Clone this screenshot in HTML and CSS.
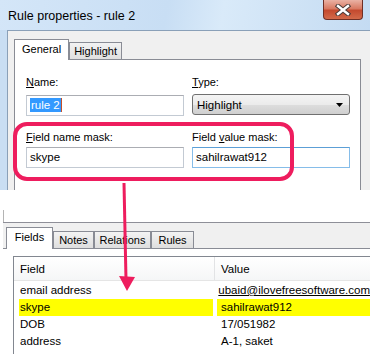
FILE: index.html
```html
<!DOCTYPE html>
<html lang="en">

<head>
    <meta charset="UTF-8">
    <title>Rule properties - rule 2</title>
    <link rel="stylesheet" href="styles.css">
</head>

<body>
    <!-- Rule properties dialog (top capture) -->
    <div class="window">
        <div class="titlebar">
            <span class="title">Rule properties - rule 2</span>
            <div class="close">
                <svg width="16" height="12" viewBox="0 0 16 12">
                    <path d="M3 2 L13 10 M13 2 L3 10" stroke="#4a3a38" stroke-width="4.4" stroke-linecap="square" fill="none"/>
                    <path d="M3 2 L13 10 M13 2 L3 10" stroke="#ffffff" stroke-width="2.4" stroke-linecap="square" fill="none"/>
                </svg>
            </div>
        </div>

        <div class="dialog-body">
            <div class="tabs">
                <div class="tab active">General</div>
                <div class="tab">Highlight</div>
            </div>

            <div class="pane">
                <div class="form-grid">
                    <div class="field first">
                        <label><u>N</u>ame:</label>
                        <div class="input"><span class="selected">rule 2</span></div>
                    </div>
                    <div class="field first">
                        <label><u>T</u>ype:</label>
                        <div class="select">
                            <span>Highlight</span>
                            <svg width="7" height="4" viewBox="0 0 7 4"><path d="M0 0 H7 L3.5 4 Z" fill="#000"/></svg>
                        </div>
                    </div>
                    <div class="field">
                        <label><u>F</u>ield name mask:</label>
                        <div class="input">skype</div>
                    </div>
                    <div class="field">
                        <label>Field <u>v</u>alue mask:</label>
                        <div class="input focused">sahilrawat912</div>
                    </div>
                </div>
            </div>
        </div>
    </div>

    <!-- Record panel (bottom capture) -->
    <div class="lower">
        <div class="frame-edge"></div>
        <div class="strip">
            <div class="tab2 active">Fields</div>
            <div class="tab2">Notes</div>
            <div class="tab2">Relations</div>
            <div class="tab2">Rules</div>
        </div>
        <div class="pane2">
            <div class="list">
                <div class="list-head">
                    <div class="col-field">Field</div>
                    <div class="col-value">Value</div>
                </div>
                <div class="row">
                    <div class="cell-field">email address</div>
                    <div class="cell-value link">ubaid@ilovefreesoftware.com</div>
                </div>
                <div class="row hit">
                    <div class="cell-field">skype</div>
                    <div class="cell-value">sahilrawat912</div>
                </div>
                <div class="row">
                    <div class="cell-field">DOB</div>
                    <div class="cell-value">17/051982</div>
                </div>
                <div class="row">
                    <div class="cell-field">address</div>
                    <div class="cell-value">A-1, saket</div>
                </div>
            </div>
        </div>
    </div>

    <!-- Annotation drawn over both captures -->
    <svg class="annot" width="370" height="354" viewBox="0 0 370 354">
        <rect x="15" y="124" width="277" height="55" rx="12" ry="12" fill="none" stroke="#ee1d5e" stroke-width="4"/>
        <path d="M124 183 L126 280" stroke="#ee1d5e" stroke-width="3" fill="none"/>
        <path d="M119 276 L135 277 L127 291 Z" fill="#ee1d5e"/>
    </svg>
</body>

</html>
```

FILE: styles.css
```css
body {
    font-family: 'Liberation Sans', Arial, sans-serif;
    font-size: 11px;
    margin: 0;
    padding: 0;
    width: 370px;
    height: 354px;
    overflow: hidden;
    background-color: #ffffff;
    color: #000;
}

/* Dialog window */
.window {
    height: 190px;
    display: flex;
    flex-direction: column;
    background-color: #c9def3;
}

.titlebar {
    height: 30px;
    display: flex;
    align-items: flex-start;
    justify-content: space-between;
    background: linear-gradient(100deg, #d4e6f8 0%, #c8def4 45%, #d9eaf9 60%, #c4dbf2 100%);
}

.title {
    font-size: 12.5px;
    margin: 9px 0 0 8px;
    color: #000;
}

.close {
    width: 38px;
    height: 19px;
    margin-right: 7px;
    border: 1px solid #6e2f26;
    border-top: none;
    border-radius: 0 0 4px 4px;
    background: linear-gradient(#eab2a4 0%, #d97a63 45%, #c44a2f 55%, #d36a4a 100%);
    display: flex;
    align-items: center;
    justify-content: center;
}

.dialog-body {
    flex: 1;
    display: flex;
    flex-direction: column;
    margin-left: 7px;
    border-top: 1px solid #8aa0b8;
    border-left: 1px solid #8aa0b8;
    background-color: #f0f0f0;
    padding-left: 6px;
}

.tabs {
    display: flex;
    align-items: flex-end;
    height: 19px;
    margin-top: 9px;
}

.tab {
    height: 16px;
    line-height: 16px;
    padding: 0 4px;
    border: 1px solid #898c95;
    border-bottom: none;
    background: linear-gradient(#f2f2f2, #e0e0e0);
}

.tab.active {
    position: relative;
    z-index: 1;
    height: 20px;
    line-height: 19px;
    margin-bottom: -1px;
    padding: 0 7px;
    background: #ffffff;
}

.pane {
    flex: 1;
    width: 345px;
    border: 1px solid #898c95;
    border-bottom: none;
    background-color: #ffffff;
}

.form-grid {
    display: grid;
    grid-template-columns: 158px 158px;
    column-gap: 8px;
    row-gap: 13px;
    padding: 14px 0 0 11px;
}

.field label {
    display: block;
    height: 16px;
    line-height: 16px;
    margin-bottom: 2px;
}

.field.first label {
    margin-bottom: 5px;
}

.input {
    height: 19px;
    line-height: 19px;
    padding: 0 3px;
    border: 1px solid #c3cad3;
    border-top-color: #abadb3;
    background: #ffffff;
    font-size: 11.5px;
}

.input.focused {
    border-color: #86bde9;
    border-top-color: #5c9fd6;
}

.selected {
    background-color: #3399ff;
    color: #ffffff;
    padding: 1px 1px;
    border-right: 1px solid #c4502a;
}

.select {
    height: 19px;
    margin-top: -1px;
    padding: 0 6px 0 4px;
    border: 1px solid #707070;
    border-radius: 3px;
    background: linear-gradient(#f4f4f4 0%, #ebebeb 50%, #dddddd 51%, #cfcfcf 100%);
    display: flex;
    align-items: center;
    justify-content: space-between;
    font-size: 11.5px;
}

/* Lower record panel */
.lower {
    margin-top: 20px;
    margin-left: 3px;
}

.frame-edge {
    height: 12px;
    border-left: 1px solid #b4b4b4;
}

.strip {
    height: 25px;
    display: flex;
    align-items: flex-end;
    padding-left: 3px;
    border-top: 1px solid #8e8f98;
    background-color: #f0f0f0;
}

.tab2 {
    height: 16px;
    line-height: 16px;
    border: 1px solid #898c95;
    border-bottom: none;
    text-align: center;
    background: linear-gradient(#f3f3f3, #dedede);
    font-size: 11px;
}

.tab2:nth-child(2) { width: 39px; }
.tab2:nth-child(3) { width: 55px; }
.tab2:nth-child(4) { width: 41px; }

.tab2.active {
    position: relative;
    z-index: 1;
    width: 45px;
    height: 21px;
    line-height: 19px;
    margin-bottom: -1px;
    background: #ffffff;
}

.pane2 {
    border-top: 1px solid #898c95;
    background-color: #ffffff;
    padding: 7px 0 0 10px;
    height: 98px;
}

.list {
    border-left: 1px solid #828790;
    border-top: 1px solid #828790;
    height: 97px;
}

.list-head {
    display: flex;
    height: 23px;
    line-height: 24px;
    border-bottom: 1px solid #e5e5e5;
    background: linear-gradient(#ffffff, #f5f6f7);
    font-size: 11.5px;
}

.col-field {
    width: 194px;
    padding-left: 6px;
    border-right: 1px solid #e2e3e5;
}

.col-value {
    flex: 1;
    padding-left: 6px;
}

.row {
    display: flex;
    height: 17px;
    line-height: 17px;
    padding-left: 5px;
    column-gap: 4px;
    font-size: 11.5px;
}

.list-head + .row {
    margin-top: 1px;
}

.cell-field {
    width: 193px;
    padding-left: 1px;
}

.cell-value {
    flex: 1;
    padding-left: 4px;
}

.cell-value.link {
    text-decoration: underline;
}

.row.hit .cell-field,
.row.hit .cell-value {
    background-color: #ffff00;
}

.annot {
    position: absolute;
    left: 0;
    top: 0;
    pointer-events: none;
}
```
